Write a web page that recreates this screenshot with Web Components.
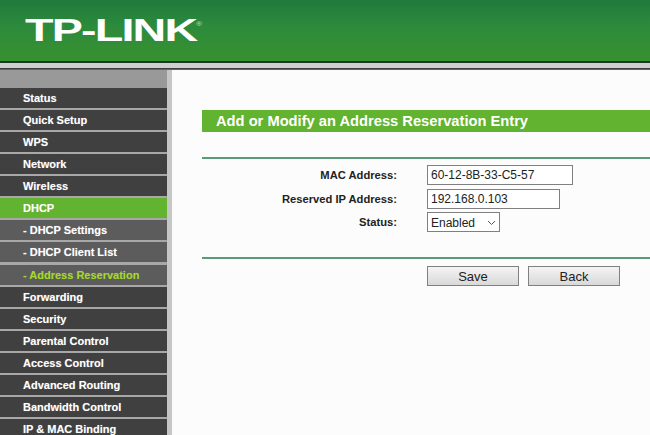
<!DOCTYPE html>
<html>
<head>
<meta charset="utf-8">
<title>TP-LINK</title>
<style>
    html, body { margin: 0; height: 100%; overflow: hidden; background: #fcfcfc; }
    body { font-family: "Liberation Sans", Arial, sans-serif; display: flex; flex-direction: column; height: 435px; }
</style>
</head>
<body>
<tp-header></tp-header>
<div style="display:flex;flex:1;min-height:0">
    <tp-menu>
        <tp-item>Status</tp-item>
        <tp-item>Quick Setup</tp-item>
        <tp-item>WPS</tp-item>
        <tp-item>Network</tp-item>
        <tp-item>Wireless</tp-item>
        <tp-item active>DHCP</tp-item>
        <tp-item sub>- DHCP Settings</tp-item>
        <tp-item sub>- DHCP Client List</tp-item>
        <tp-item sub current>- Address Reservation</tp-item>
        <tp-item>Forwarding</tp-item>
        <tp-item>Security</tp-item>
        <tp-item>Parental Control</tp-item>
        <tp-item>Access Control</tp-item>
        <tp-item>Advanced Routing</tp-item>
        <tp-item>Bandwidth Control</tp-item>
        <tp-item>IP &amp; MAC Binding</tp-item>
    </tp-menu>
    <tp-panel heading="Add or Modify an Address Reservation Entry">
        <tp-field label="MAC Address:"><input style="width:146px;height:20px" value="60-12-8B-33-C5-57"></tp-field>
        <tp-field label="Reserved IP Address:"><input style="width:133px;height:20px" value="192.168.0.103"></tp-field>
        <tp-field label="Status:"><tp-select style="width:73px">Enabled</tp-select></tp-field>
        <button slot="actions">Save</button>
        <button slot="actions">Back</button>
    </tp-panel>
</div>

<script>
// Green banner with the logo
class TpHeader extends HTMLElement {
    constructor() {
        super();
        this.attachShadow({ mode: 'open' });
        this.shadowRoot.innerHTML = `
            <style>
                :host { display: block; height: 70px; }
                .banner {
                    height: 61px;
                    box-sizing: border-box;
                    padding: 18px 0 0 25px;
                    background: linear-gradient(#1f7a3c 0, #2c8a3c 25px, #38912f 61px);
                }
                .logo {
                    display: inline-block;
                    font: bold 31px/25px "Liberation Sans", sans-serif;
                    color: #fff;
                    transform: scaleX(1.505);
                    transform-origin: left center;
                    letter-spacing: -1.2px;
                }
                sup { font: 5px/5px "Liberation Sans", sans-serif; vertical-align: 15px; color: #cfe3cf; }
                .dark { height: 2px; background: #1d3a22; }
                .strip { height: 5px; background: #cfcfcf; }
                .line { height: 2px; background: linear-gradient(#2b2b2b, #777); }
            </style>
            <div class="banner"><span class="logo">TP-LINK<sup>®</sup></span></div>
            <div class="dark"></div>
            <div class="strip"></div>
            <div class="line"></div>
        `;
    }
}

// Left column, holds the tp-item rows
class TpMenu extends HTMLElement {
    constructor() {
        super();
        this.attachShadow({ mode: 'open' });
        this.shadowRoot.innerHTML = `
            <style>
                :host {
                    display: block;
                    width: 172px;
                    flex: none;
                    box-sizing: border-box;
                    background: #a8a8a8;
                    border-right: 5px solid #c6c6c6;
                    box-shadow: inset -1px 0 0 #a0a0a0;
                    overflow: hidden;
                }
                .top { height: 18px; background: #999; }
            </style>
            <div class="top"></div>
            <slot></slot>
        `;
    }
}

class TpItem extends HTMLElement {
    constructor() {
        super();
        this.attachShadow({ mode: 'open' });
        this.shadowRoot.innerHTML = `
            <style>
                :host {
                    display: block;
                    height: 20px;
                    margin-bottom: 2.07px;
                    padding-left: 23px;
                    background: #404040;
                    color: #fff;
                    font: bold 11px/21px "Liberation Sans", sans-serif;
                    text-shadow: 0 0 1px rgba(255, 255, 255, .35);
                    white-space: nowrap;
                }
                :host([active]) { background: #62b32f; }
                :host([sub]) { background: #5c5c5c; }
                :host([current]) { color: #a4d82e; text-shadow: 0 0 1px rgba(164, 216, 46, .35); }
            </style>
            <slot></slot>
        `;
    }
}

// Content area: title bar, rule, form rows, rule, buttons
class TpPanel extends HTMLElement {
    constructor() {
        super();
        this.attachShadow({ mode: 'open' });
        this.shadowRoot.innerHTML = `
            <style>
                :host { display: block; flex: 1; padding: 40px 0 0 30px; background: #fcfcfc; min-width: 0; }
                h1 {
                    margin: 0;
                    height: 22px;
                    padding-left: 14px;
                    background: #62b32f;
                    color: #fff;
                    font: bold 14.7px/22px "Liberation Sans", sans-serif;
                }
                .rule { height: 2px; background: #5b9c78; }
                .form { display: flex; flex-direction: column; gap: 3.5px; margin: 6px 0 25px; }
                .actions { display: flex; gap: 9px; padding: 7px 0 0 225px; }
                ::slotted(button) {
                    width: 92px;
                    height: 20px;
                    box-sizing: border-box;
                    padding: 0;
                    border: 1px solid #808080;
                    background: linear-gradient(#f4f4f4, #d9d9d9);
                    color: #222;
                    font: 13px "Liberation Sans", sans-serif;
                }
            </style>
            <h1></h1>
            <div class="rule" style="margin-top:25px"></div>
            <div class="form"><slot></slot></div>
            <div class="rule"></div>
            <div class="actions"><slot name="actions"></slot></div>
        `;
        this.shadowRoot.querySelector('h1').textContent = this.getAttribute('heading');
    }
}

class TpField extends HTMLElement {
    constructor() {
        super();
        this.attachShadow({ mode: 'open' });
        this.shadowRoot.innerHTML = `
            <style>
                :host { display: grid; grid-template-columns: 195px 1fr; column-gap: 30px; align-items: center; }
                label { text-align: right; font: bold 11.2px "Liberation Sans", sans-serif; color: #222; }
                .control { display: flex; }
                ::slotted(input) {
                    box-sizing: border-box;
                    margin: 0;
                    border: 1px solid #808080;
                    border-radius: 0;
                    background: #fff;
                    color: #222;
                    padding: 0 3px;
                    font: 12px "Liberation Sans", sans-serif;
                    outline: none;
                }
            </style>
            <label></label>
            <div class="control"><slot></slot></div>
        `;
        this.shadowRoot.querySelector('label').textContent = this.getAttribute('label');
    }
}

// Dropdown drawn closed, with the thin chevron of the reference
class TpSelect extends HTMLElement {
    constructor() {
        super();
        this.attachShadow({ mode: 'open' });
        this.shadowRoot.innerHTML = `
            <style>
                :host {
                    display: flex;
                    align-items: center;
                    justify-content: space-between;
                    height: 20px;
                    box-sizing: border-box;
                    padding: 1px 3px 0;
                    border: 1px solid #808080;
                    background: #fff;
                    color: #222;
                    font: 12px "Liberation Sans", sans-serif;
                }
                svg { display: block; }
            </style>
            <slot></slot>
            <svg width="9" height="6" viewBox="0 0 9 6"><path d="M1 1l3.5 3.5L8 1" fill="none" stroke="#555" stroke-width="1"/></svg>
        `;
    }
}

customElements.define('tp-header', TpHeader);
customElements.define('tp-menu', TpMenu);
customElements.define('tp-item', TpItem);
customElements.define('tp-panel', TpPanel);
customElements.define('tp-field', TpField);
customElements.define('tp-select', TpSelect);
</script>
</body>
</html>
